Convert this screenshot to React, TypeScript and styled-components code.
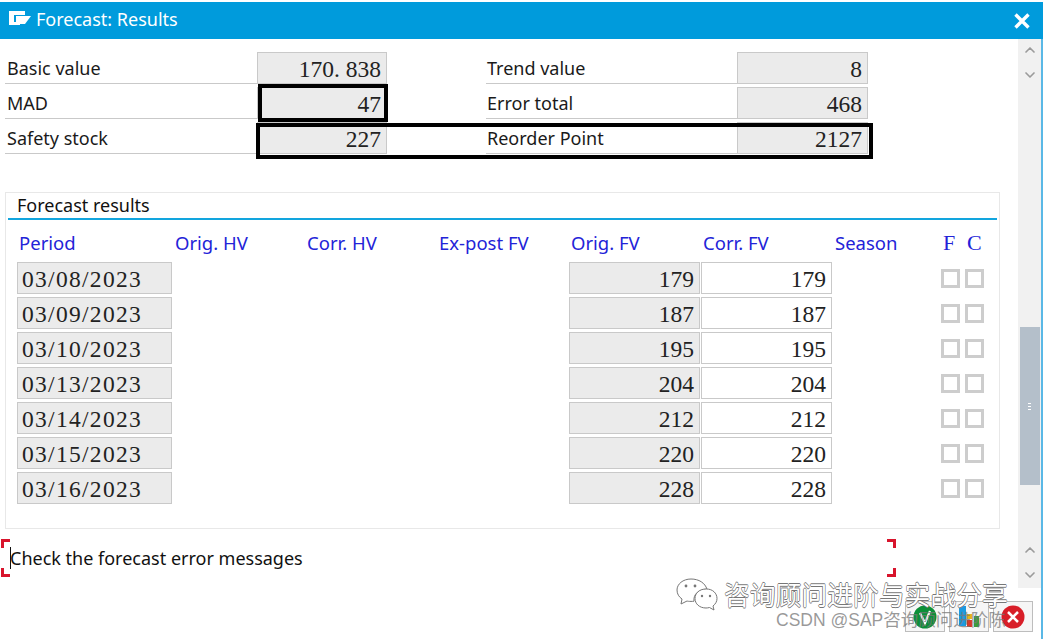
import React from 'react';
import styled, { createGlobalStyle } from 'styled-components';
import { ChevronDown, ChevronUp } from 'lucide-react';

const GlobalStyle = createGlobalStyle`
  html, body {
    margin: 0;
    background: #fff;
  }
`;

const uiFont = `"Noto Sans", "Open Sans", sans-serif`;
const numFont = `"Liberation Serif", serif`;
const cellBorder = '#c9c9c9';
const cellFill = '#ebebeb';

const Screen = styled.div`
  position: relative;
  width: 1043px;
  height: 639px;
  overflow: hidden;
  padding-top: 2px;
  box-sizing: border-box;
  background: #fff;
  font-family: ${uiFont};
  color: #1a1a1a;
`;

const TitleBar = styled.header`
  display: flex;
  align-items: center;
  height: 37px;
  padding: 0 12px 0 9px;
  background: #009bdc;
  color: #fff;
`;

const TitleIconSvg = styled.svg`
  flex: none;
  margin-bottom: 4px;
`;

const TitleText = styled.h1`
  flex: 1;
  align-self: flex-start;
  margin: 0 0 0 5px;
  font-size: 18px;
  font-weight: 400;
  line-height: 35px;
`;

const Content = styled.div`
  display: flex;
  height: 600px;
`;

const Main = styled.main`
  width: 1018px;
`;

/* scroll column */
const ScrollColumn = styled.aside`
  display: flex;
  flex-direction: column;
  align-items: center;
  width: 23px;
  height: 549px;
  background: #f1f1f1;
`;

const ScrollArrow = styled.div<{ $top: number }>`
  display: flex;
  justify-content: center;
  height: 16px;
  margin-top: ${p => p.$top}px;
  color: #9b9b9b;
`;

const ScrollThumb = styled.div`
  display: flex;
  align-items: center;
  justify-content: center;
  width: 20px;
  height: 158px;
  margin-top: 244px;
  background: #b4bfca;
`;

const ThumbGrip = styled.div`
  width: 3px;
  height: 7px;
  background: repeating-linear-gradient(to bottom, #fff 0 1px, transparent 1px 3px);
`;

const EdgeLine = styled.div`
  width: 2px;
  height: 600px;
  background: #5ab8e6;
`;

/* top form */
const Form = styled.section`
  position: relative;
  display: grid;
  grid-template-columns: 252px 130px 99px 251px 131px;
  grid-auto-rows: 32px;
  row-gap: 3px;
  padding: 13px 0 0 5px;
`;

const Label = styled.div<{ $inset?: number }>`
  padding-left: ${p => p.$inset ?? 2}px;
  border-bottom: 1px solid ${cellBorder};
  font-size: 18px;
  line-height: 33px;
`;

const Gap = styled.div``;

const ValueCell = styled.div<{ $white?: boolean }>`
  box-sizing: border-box;
  height: 32px;
  padding-right: 5px;
  border: 1px solid ${cellBorder};
  background: ${p => (p.$white ? '#fff' : cellFill)};
  font-family: ${numFont};
  font-size: 23.5px;
  line-height: 32px;
  text-align: right;
  color: #222;
`;

const Highlight = styled.div<{ $left: number; $top: number; $width: number; $height: number }>`
  position: absolute;
  left: ${p => p.$left}px;
  top: ${p => p.$top}px;
  width: ${p => p.$width}px;
  height: ${p => p.$height}px;
  box-sizing: border-box;
  border: 4px solid #000;
`;

/* results panel */
const Panel = styled.section`
  box-sizing: border-box;
  width: 995px;
  height: 337px;
  margin: 38px 0 0 5px;
  padding: 0 2px;
  border: 1px solid #e8e8e8;
`;

const PanelTitle = styled.h2`
  height: 25px;
  margin: 0;
  padding-left: 9px;
  border-bottom: 2px solid #12a5de;
  font-size: 18px;
  font-weight: 400;
  line-height: 25px;
  color: #111;
`;

const HeaderRow = styled.div`
  display: grid;
  grid-template-columns: 156px 132px 132px 132px 132px 132px 108px 24px 24px;
  height: 42px;
  padding-left: 11px;
  font-size: 18.5px;
  line-height: 45px;
  color: #2323d8;
`;

const FlagHead = styled.span`
  font-family: ${numFont};
  font-size: 22px;
`;

const Rows = styled.div`
  display: flex;
  flex-direction: column;
  gap: 3px;
`;

const Row = styled.div`
  display: grid;
  grid-template-columns: 155px 397px 131px 131px 110px 19px 19px;
  align-items: center;
  height: 32px;
  padding-left: 9px;
`;

const DateCell = styled(ValueCell)`
  padding: 0 0 0 4px;
  letter-spacing: 1.3px;
  line-height: 33px;
  text-align: left;
`;

const FvCell = styled(ValueCell)`
  line-height: 33px;
`;

const CorrCell = styled(FvCell)`
  margin-left: 1px;
  width: 131px;
`;

const CheckGroup = styled.div`
  display: flex;
  gap: 5px;
  margin-top: 1px;
`;

const CheckBox = styled.span`
  display: block;
  flex: none;
  box-sizing: border-box;
  width: 19px;
  height: 19px;
  border: 3px solid #cdcdcd;
  background: #fff;
`;

/* message line */
const Message = styled.div`
  position: relative;
  width: 887px;
  height: 38px;
  margin: 10px 0 0 1px;
  box-sizing: border-box;
  padding-left: 9px;
  font-size: 18px;
  line-height: 38px;
  color: #111;
`;

const Caret = styled.span`
  position: absolute;
  left: 9px;
  top: 8px;
  width: 1px;
  height: 22px;
  background: #111;
`;

const Corner = styled.span<{ $right?: boolean; $bottom?: boolean }>`
  position: absolute;
  width: 9px;
  height: 9px;
  box-sizing: border-box;
  ${p => (p.$right ? 'right: -8px;' : 'left: 0;')}
  ${p => (p.$bottom ? 'bottom: 0;' : 'top: 0;')}
  border-style: solid;
  border-color: #d8142c;
  border-width: ${p => (p.$bottom ? '0 0 3px' : '3px 0 0')};
  ${p => (p.$right ? 'border-right-width: 3px;' : 'border-left-width: 3px;')}
`;

/* action buttons and watermark lying over the page */
const ButtonStrip = styled.div`
  position: absolute;
  right: 10px;
  bottom: 7px;
  display: flex;
  gap: 4px;
`;

const ActionButton = styled.div`
  display: flex;
  align-items: center;
  justify-content: center;
  box-sizing: border-box;
  width: 40px;
  height: 31px;
  border: 1px solid #bdbdbd;
  background: #f6f6f6;
`;

const Watermark = styled.div`
  position: absolute;
  left: 676px;
  top: 577px;
  display: flex;
  align-items: center;
  gap: 6px;
`;

const WatermarkText = styled.span`
  font-family: "Noto Sans CJK SC", sans-serif;
  font-size: 25.8px;
  line-height: 34px;
  white-space: nowrap;
  color: #fff;
  text-shadow: 0.6px 0 0 #777, -0.6px 0 0 #777, 0 0.6px 0 #777, 0 -0.6px 0 #777;
`;

const SourceText = styled.div`
  position: absolute;
  left: 776px;
  top: 608px;
  font-family: "Liberation Sans", "Noto Sans CJK SC", sans-serif;
  font-size: 17.5px;
  line-height: 24px;
  white-space: nowrap;
  color: rgba(120, 120, 120, 0.75);
`;

const WindowIcon = () => (
  <TitleIconSvg width="22" height="16" viewBox="0 0 22 16" aria-hidden="true">
    <path fill="#fff" d="M0 0h16v4H5v7h6v3H0z" />
    <path fill="#fff" d="M7 5h15l-6 8H7z" />
  </TitleIconSvg>
);

const CloseIcon = () => (
  <svg width="18" height="18" viewBox="0 0 18 18" aria-hidden="true">
    <path d="M2.500 2.500l13 13M15.500 2.500l-13 13" stroke="#fff" strokeWidth="3.400" fill="none" />
  </svg>
);

const WeChatIcon = () => (
  <svg width="42" height="34" viewBox="0 0 42 34" fill="#fff" stroke="#777" strokeWidth="1" aria-hidden="true">
    <path d="M15 2C7 2 1 7 1 13c0 4 2 7 5 9l-1 5 6-3c1 .3 2 .4 4 .4 1 0 2 0 3-.2-1-7 5-12 13-12C29 6 23 2 15 2z" />
    <path d="M30 12c-6.600 0-11 4.200-11 9.500S23.400 31 30 31c1 0 2.500-.2 3.500-.5l4.500 2.500-1-4c2.500-2 4-4.500 4-7.500 0-5.300-4.400-9.500-10.500-9.500z" />
    <circle cx="10" cy="9" r="1.400" fill="#777" stroke="none" />
    <circle cx="19" cy="9" r="1.400" fill="#777" stroke="none" />
    <circle cx="26" cy="19" r="1.200" fill="#777" stroke="none" />
    <circle cx="34" cy="19" r="1.200" fill="#777" stroke="none" />
  </svg>
);

const CheckBadge = () => (
  <svg width="24" height="24" viewBox="0 0 24 24" aria-hidden="true">
    <circle cx="12" cy="12" r="11.500" fill="#0c8f38" />
    <path d="M7 8l5 10 5-12" stroke="#fff" strokeWidth="2.200" fill="none" />
  </svg>
);

const BarsBadge = () => (
  <svg width="26" height="26" viewBox="0 0 26 26" aria-hidden="true">
    <rect x="3" y="2" width="7" height="20" fill="#1c9ae0" />
    <rect x="11" y="10" width="5" height="5" fill="#e8b21a" />
    <rect x="11" y="16" width="5" height="7" fill="#d93a2b" />
    <rect x="18" y="12" width="5" height="11" fill="#3c9a3c" />
  </svg>
);

const CancelBadge = () => (
  <svg width="24" height="24" viewBox="0 0 24 24" aria-hidden="true">
    <circle cx="12" cy="12" r="11.500" fill="#d81e28" />
    <path d="M7 7l10 10M17 7L7 17" stroke="#fff" strokeWidth="2.500" fill="none" />
  </svg>
);

const summary = [
  { label: 'Basic value', value: '170. 838', label2: 'Trend value', value2: '8' },
  { label: 'MAD', value: '47', label2: 'Error total', value2: '468' },
  { label: 'Safety stock', value: '227', label2: 'Reorder Point', value2: '2127' },
];

const headers = ['Period', 'Orig. HV', 'Corr. HV', 'Ex-post FV', 'Orig. FV', 'Corr. FV', 'Season'];

const results = [
  { date: '03/08/2023', fv: 179 },
  { date: '03/09/2023', fv: 187 },
  { date: '03/10/2023', fv: 195 },
  { date: '03/13/2023', fv: 204 },
  { date: '03/14/2023', fv: 212 },
  { date: '03/15/2023', fv: 220 },
  { date: '03/16/2023', fv: 228 },
];

export default function App() {
  return (
    <Screen>
      <GlobalStyle />
      <TitleBar>
        <WindowIcon />
        <TitleText>Forecast: Results</TitleText>
        <CloseIcon />
      </TitleBar>
      <Content>
        <Main>
          <Form>
            {summary.map(s => (
              <React.Fragment key={s.label}>
                <Label>{s.label}</Label>
                <ValueCell>{s.value}</ValueCell>
                <Gap />
                <Label $inset={1}>{s.label2}</Label>
                <ValueCell>{s.value2}</ValueCell>
              </React.Fragment>
            ))}
            <Highlight $left={258} $top={45} $width={130} $height={38} />
            <Highlight $left={256} $top={84} $width={617} $height={36} />
          </Form>
          <Panel>
            <PanelTitle>Forecast results</PanelTitle>
            <HeaderRow>
              {headers.map(h => (
                <span key={h}>{h}</span>
              ))}
              <FlagHead>F</FlagHead>
              <FlagHead>C</FlagHead>
            </HeaderRow>
            <Rows>
              {results.map(r => (
                <Row key={r.date}>
                  <DateCell>{r.date}</DateCell>
                  <Gap />
                  <FvCell>{r.fv}</FvCell>
                  <CorrCell $white>{r.fv}</CorrCell>
                  <Gap />
                  <CheckGroup>
                    <CheckBox />
                    <CheckBox />
                  </CheckGroup>
                </Row>
              ))}
            </Rows>
          </Panel>
          <Message>
            <Corner />
            <Corner $bottom />
            <Corner $right />
            <Corner $right $bottom />
            <Caret />
            Check the forecast error messages
          </Message>
        </Main>
        <ScrollColumn>
          <ScrollArrow $top={3}>
            <ChevronUp size={16} strokeWidth={2.5} />
          </ScrollArrow>
          <ScrollArrow $top={9}>
            <ChevronDown size={16} strokeWidth={2.5} />
          </ScrollArrow>
          <ScrollThumb>
            <ThumbGrip />
          </ScrollThumb>
          <ScrollArrow $top={57}>
            <ChevronUp size={16} strokeWidth={2.5} />
          </ScrollArrow>
          <ScrollArrow $top={9}>
            <ChevronDown size={16} strokeWidth={2.5} />
          </ScrollArrow>
        </ScrollColumn>
        <EdgeLine />
      </Content>
      <ButtonStrip>
        <ActionButton>
          <CheckBadge />
        </ActionButton>
        <ActionButton>
          <BarsBadge />
        </ActionButton>
        <ActionButton>
          <CancelBadge />
        </ActionButton>
      </ButtonStrip>
      <Watermark>
        <WeChatIcon />
        <WatermarkText>咨询顾问进阶与实战分享</WatermarkText>
      </Watermark>
      <SourceText>CSDN @SAP咨询顾问进阶陈</SourceText>
    </Screen>
  );
}
